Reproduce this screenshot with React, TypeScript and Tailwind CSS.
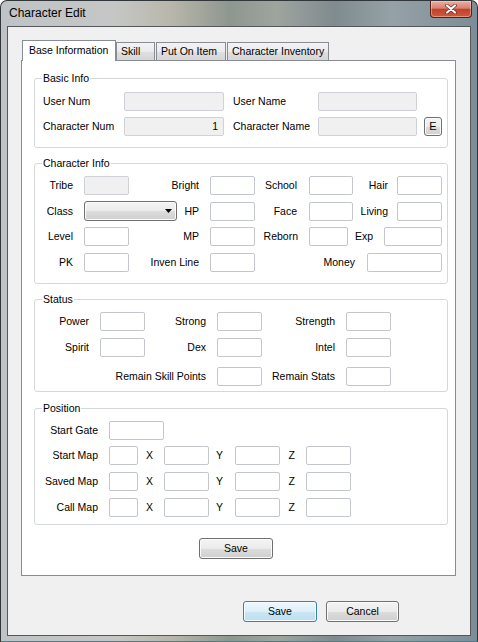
import React from "react";

const btnGray =
  "border border-[#707070] rounded-[3px] bg-[linear-gradient(180deg,#f4f4f4_0%,#ebebeb_50%,#dddddd_51%,#cfcfcf_100%)] shadow-[inset_0_0_0_1px_#fbfbfb]";

function Label({ w, children, left }: { w: string; children: React.ReactNode; left?: boolean }) {
  return (
    <span className={`shrink-0 leading-[13px] whitespace-nowrap ${left ? "text-left" : "text-right"} ${w}`}>
      {children}
    </span>
  );
}

function Box({ className = "", gray, value }: { className?: string; gray?: boolean; value?: string }) {
  return (
    <div
      className={`shrink-0 h-[19px] border rounded-[2px] flex items-center justify-end pr-[5px] leading-[13px] ${
        gray ? "bg-[#f0f0f0] border-[#cfd2d6]" : "bg-white border-[#c3c7cd]"
      } ${className}`}
    >
      {value}
    </div>
  );
}

function Group({ title, className = "", children }: { title: string; className?: string; children: React.ReactNode }) {
  return (
    <div className={`relative border border-[#d4d8db] rounded-[3px] flex flex-col ${className}`}>
      {/* legend sits on the border line */}
      <span className="absolute -top-[7px] left-[7px] px-[1px] bg-white leading-[13px]">{title}</span>
      {children}
    </div>
  );
}

function Row({ className = "", children }: { className?: string; children: React.ReactNode }) {
  return <div className={`flex items-center h-[19px] ${className}`}>{children}</div>;
}

export default function App() {
  return (
    <div className="w-[478px] h-[642px] flex flex-col rounded-t-[7px] border border-[#30363a] border-b-[#2d8aa0] overflow-hidden bg-[linear-gradient(90deg,#bfc3c5_0%,#c6c7c5_24%,#b8b6aa_36%,#8e978f_48%,#9ea59f_58%,#808b8f_70%,#96a1a7_82%,#7d8d96_100%)] font-['Liberation_Sans',Arial,sans-serif] text-[10.5px] text-black">
      {/* title bar */}
      <div className="h-[25px] shrink-0 flex items-start justify-between pl-[8px] pr-[5px]">
        <span className="mt-[5px] text-[12px] leading-[15px] text-black">Character Edit</span>
        <div className="w-[42px] h-[17px] border border-t-0 border-[#5b1c14] rounded-b-[4px] flex items-center justify-center bg-[linear-gradient(180deg,#eab0a3_0%,#d9806f_45%,#c3402c_52%,#cf5a3a_100%)] shadow-[inset_0_0_0_1px_rgba(255,220,210,0.45)]">
          <svg width="12" height="10" viewBox="0 0 12 10">
            <path d="M2 1.5L10 8.5M10 1.5L2 8.5" stroke="#6b2a20" strokeWidth="3.6" strokeLinecap="round" />
            <path d="M2 1.5L10 8.5M10 1.5L2 8.5" stroke="#ffffff" strokeWidth="2.2" strokeLinecap="round" />
          </svg>
        </div>
      </div>

      {/* frame body */}
      <div className="flex-1 flex flex-col px-[6px] pb-[5px]">
        <div className="flex-1 flex flex-col border border-[#52585c] bg-[#f0f0f0] pt-[13px] pl-[13px] pr-[14px]">
          {/* tabs */}
          <div className="h-[21px] flex items-end">
            <div className="relative z-10 ml-[1px] w-[94px] h-[21px] bg-white border border-b-0 border-[#898c95] flex items-center pl-[6px] pb-[1px] leading-[13px]">
              Base Information
            </div>
            <div className="w-[39px] h-[18px] mb-[1px] border border-b-0 border-[#898c95] flex items-center pl-[4px] leading-[13px] bg-[linear-gradient(180deg,#f3f3f3_0%,#ebebeb_50%,#dfdfdf_51%,#d6d6d6_100%)]">
              Skill
            </div>
            <div className="ml-[1px] w-[70px] h-[18px] mb-[1px] border border-b-0 border-[#898c95] flex items-center pl-[4px] leading-[13px] bg-[linear-gradient(180deg,#f3f3f3_0%,#ebebeb_50%,#dfdfdf_51%,#d6d6d6_100%)]">
              Put On Item
            </div>
            <div className="ml-[1px] w-[102px] h-[18px] mb-[1px] border border-b-0 border-[#898c95] flex items-center pl-[4px] leading-[13px] bg-[linear-gradient(180deg,#f3f3f3_0%,#ebebeb_50%,#dfdfdf_51%,#d6d6d6_100%)]">
              Character Inventory
            </div>
          </div>

          {/* tab panel */}
          <div className="-mt-[1px] w-[435px] h-[516px] bg-white border border-[#898c95] flex flex-col pt-[17px] pl-[12px] pr-[7px] pb-[16px]">
            <Group title="Basic Info" className="pt-[13px] pb-[11px] gap-[6px]">
              <Row className="pl-[8px]">
                <Label w="w-[81px]" left>User Num</Label>
                <Box className="w-[100px]" gray />
                <Label w="ml-[9px] w-[85px]" left>User Name</Label>
                <Box className="w-[99px]" gray />
              </Row>
              <Row className="pl-[8px]">
                <Label w="w-[81px]" left>Character Num</Label>
                <Box className="w-[100px]" gray value="1" />
                <Label w="ml-[9px] w-[85px]" left>Character Name</Label>
                <Box className="w-[99px]" gray />
                <div className={`ml-[7px] w-[18px] h-[19px] flex items-center justify-center text-[11px] ${btnGray} rounded-[2px]`}>E</div>
              </Row>
            </Group>

            <Group title="Character Info" className="mt-[15px] pt-[12px] pb-[11px]">
              <Row>
                <Label w="w-[38px]">Tribe</Label>
                <Box className="ml-[11px] w-[45px]" gray />
                <Label w="w-[70px]">Bright</Label>
                <Box className="ml-[11px] w-[45px]" />
                <Label w="w-[42px]">School</Label>
                <Box className="ml-[12px] w-[44px]" />
                <Label w="w-[35px]">Hair</Label>
                <Box className="ml-[9px] w-[45px]" />
              </Row>
              <div className="mt-[6px] flex items-center h-[20px]">
                <Label w="w-[38px]">Class</Label>
                <div className={`ml-[11px] w-[93px] h-[20px] shrink-0 flex items-center justify-end pr-[4px] ${btnGray}`}>
                  <svg width="7" height="4" viewBox="0 0 7 4">
                    <path d="M0 0H7L3.5 4Z" fill="#000" />
                  </svg>
                </div>
                <Label w="w-[22px]">HP</Label>
                <Box className="ml-[11px] w-[45px]" />
                <Label w="w-[42px]">Face</Label>
                <Box className="ml-[12px] w-[44px]" />
                <Label w="w-[35px]">Living</Label>
                <Box className="ml-[9px] w-[45px]" />
              </div>
              <Row className="mt-[6px]">
                <Label w="w-[38px]">Level</Label>
                <Box className="ml-[11px] w-[45px]" />
                <Label w="w-[70px]">MP</Label>
                <Box className="ml-[11px] w-[45px]" />
                <Label w="w-[43px]">Reborn</Label>
                <Box className="ml-[11px] w-[39px]" />
                <Label w="w-[25px]">Exp</Label>
                <Box className="ml-[11px] w-[58px]" />
              </Row>
              <Row className="mt-[7px]">
                <Label w="w-[38px]">PK</Label>
                <Box className="ml-[11px] w-[45px]" />
                <Label w="w-[70px]">Inven Line</Label>
                <Box className="ml-[11px] w-[45px]" />
                <Label w="w-[100px]">Money</Label>
                <Box className="ml-[12px] w-[75px]" />
              </Row>
            </Group>

            <Group title="Status" className="mt-[15px] pt-[12px] pb-[5px]">
              <Row>
                <Label w="w-[54px]">Power</Label>
                <Box className="ml-[11px] w-[45px]" />
                <Label w="w-[61px]">Strong</Label>
                <Box className="ml-[11px] w-[45px]" />
                <Label w="w-[73px]">Strength</Label>
                <Box className="ml-[11px] w-[45px]" />
              </Row>
              <Row className="mt-[7px]">
                <Label w="w-[54px]">Spirit</Label>
                <Box className="ml-[11px] w-[45px]" />
                <Label w="w-[61px]">Dex</Label>
                <Box className="ml-[11px] w-[45px]" />
                <Label w="w-[73px]">Intel</Label>
                <Box className="ml-[11px] w-[45px]" />
              </Row>
              <Row className="mt-[10px]">
                <Label w="w-[171px]">Remain Skill Points</Label>
                <Box className="ml-[11px] w-[45px]" />
                <Label w="w-[73px]">Remain Stats</Label>
                <Box className="ml-[11px] w-[45px]" />
              </Row>
            </Group>

            <Group title="Position" className="mt-[16px] pt-[12px] pb-[7px]">
              <Row>
                <Label w="w-[63px]">Start Gate</Label>
                <Box className="ml-[11px] w-[55px]" />
              </Row>
              {[
                ["Start Map", "mt-[6px]"],
                ["Saved Map", "mt-[7px]"],
                ["Call Map", "mt-[7px]"],
              ].map(([name, mt]) => (
                <Row key={name} className={mt}>
                  <Label w="w-[63px]">{name}</Label>
                  <Box className="ml-[11px] w-[29px]" />
                  <Label w="w-[15px]">X</Label>
                  <Box className="ml-[11px] w-[45px]" />
                  <Label w="w-[14px]">Y</Label>
                  <Box className="ml-[12px] w-[45px]" />
                  <Label w="w-[15px]">Z</Label>
                  <Box className="ml-[11px] w-[45px]" />
                </Row>
              ))}
            </Group>

            <div className={`mt-[13px] ml-[165px] w-[74px] h-[21px] flex items-center justify-center ${btnGray}`}>Save</div>
          </div>

          {/* dialog buttons */}
          <div className="mt-[25px] flex justify-end gap-[9px] pr-[57px]">
            <div className="w-[74px] h-[21px] flex items-center justify-center border border-[#3c7fb1] rounded-[3px] bg-[linear-gradient(180deg,#eef7fc_0%,#deeff8_50%,#cbe6f4_51%,#bcdeef_100%)] shadow-[inset_0_0_0_1px_#f6fbfe]">
              Save
            </div>
            <div className={`w-[73px] h-[21px] flex items-center justify-center ${btnGray}`}>Cancel</div>
          </div>
        </div>
      </div>
    </div>
  );
}
